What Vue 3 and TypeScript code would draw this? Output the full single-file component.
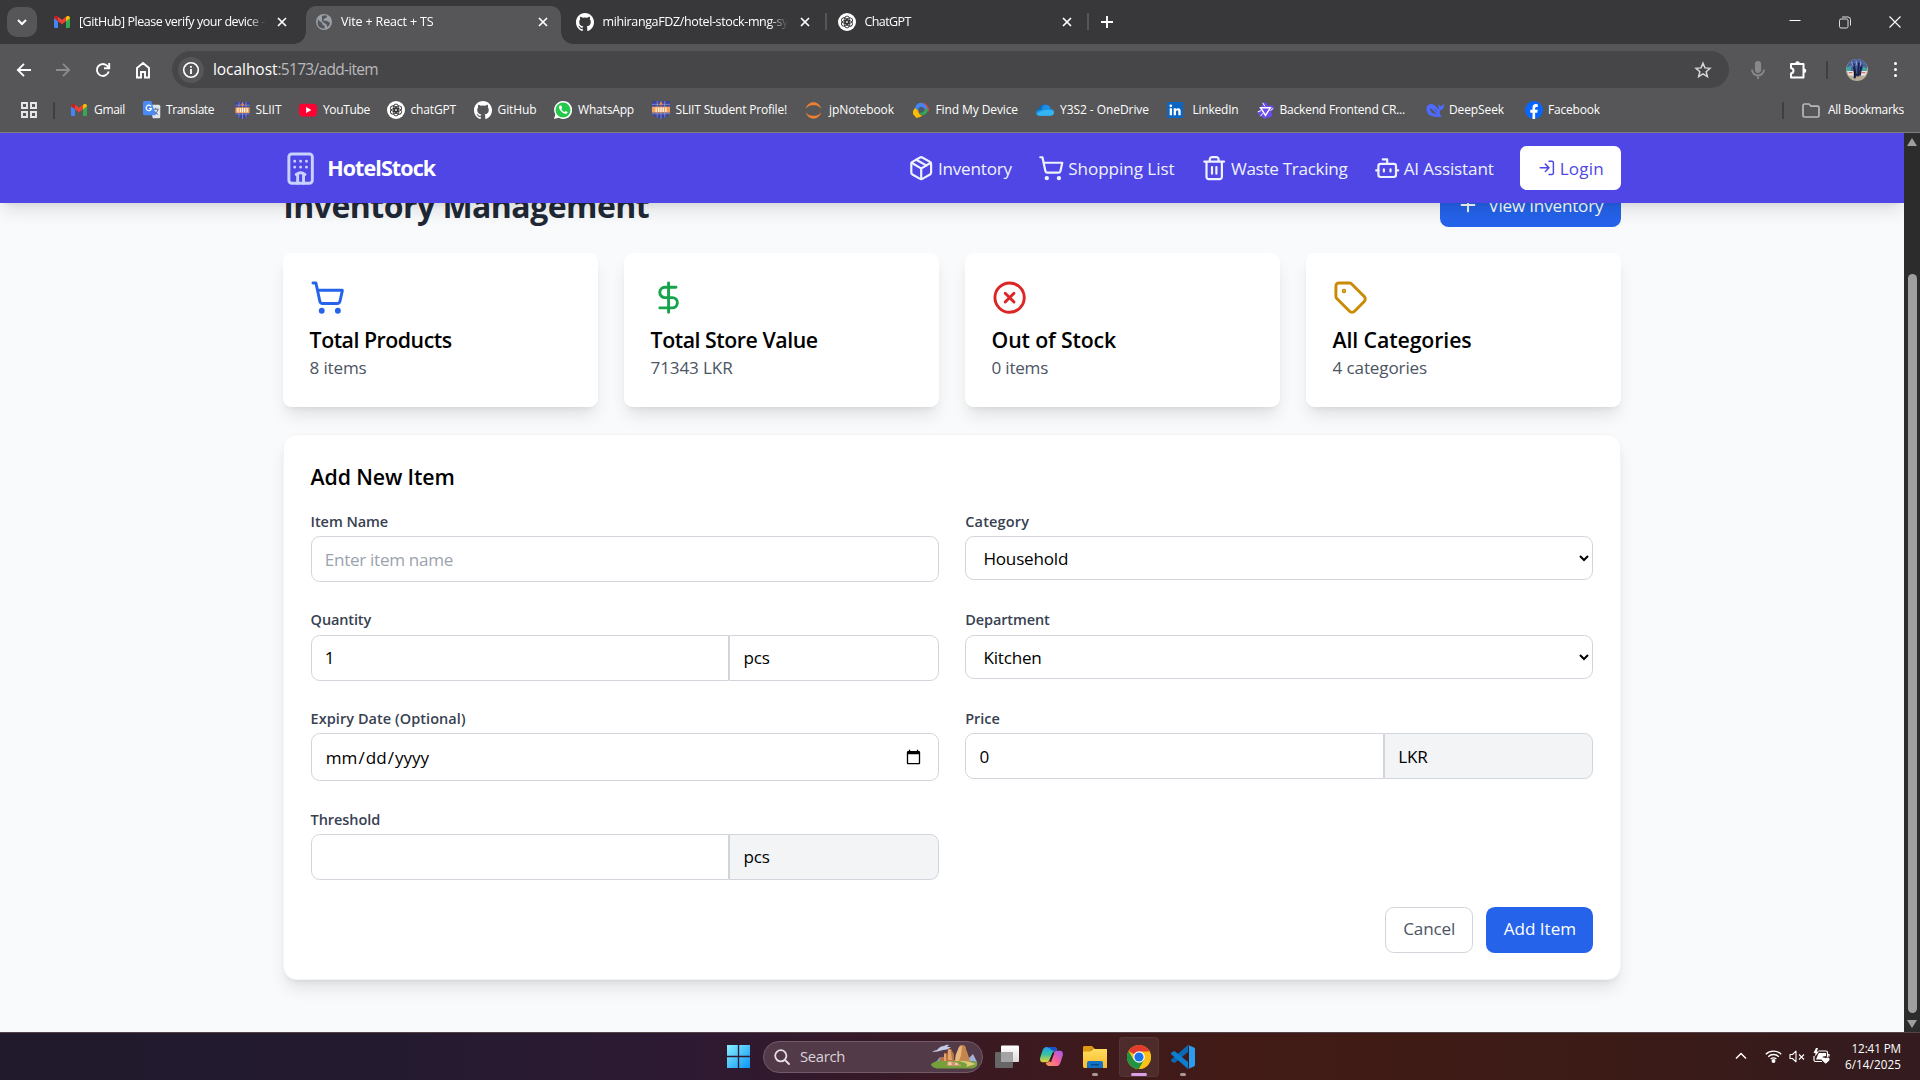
<script setup lang="ts">
import { h, type Directive, type FunctionalComponent } from 'vue'

// Tracks a label out or in so that it takes exactly the given advance width.
const vFit: Directive<HTMLElement, number> = {
  mounted(el, { value }) {
    el.style.letterSpacing = '0.001px'
    const natural = el.getBoundingClientRect().width
    const count = (el.textContent ?? '').trim().length
    el.style.letterSpacing = `${((value - natural) / count).toFixed(3)}px`
  },
}

const line: Record<string, string> = {
  hotel:
    '<path d="M10 22v-6.57M12 11h.01M12 7h.01M14 15.43V22M15 16a5 5 0 0 0-6 0M16 11h.01M16 7h.01M8 11h.01M8 7h.01"/><rect x="4" y="2" width="16" height="20" rx="2"/>',
  box: '<path d="M11 21.73a2 2 0 0 0 2 0l7-4A2 2 0 0 0 21 16V8a2 2 0 0 0-1-1.73l-7-4a2 2 0 0 0-2 0l-7 4A2 2 0 0 0 3 8v8a2 2 0 0 0 1 1.73z"/><path d="M12 22V12"/><path d="m3.3 7 7.703 4.734a2 2 0 0 0 1.994 0L20.7 7"/><path d="m7.5 4.27 9 5.15"/>',
  cart: '<circle cx="8" cy="21" r="1"/><circle cx="19" cy="21" r="1"/><path d="M2.05 2.05h2l2.66 12.42a2 2 0 0 0 2 1.58h9.78a2 2 0 0 0 1.95-1.57l1.65-7.43H5.12"/>',
  trash:
    '<path d="M3 6h18M19 6v14c0 1-1 2-2 2H7c-1 0-2-1-2-2V6M8 6V4c0-1 1-2 2-2h4c1 0 2 1 2 2v2M10 11v6M14 11v6"/>',
  bot: '<path d="M12 8V4H8"/><rect width="16" height="12" x="4" y="8" rx="2"/><path d="M2 14h2M20 14h2M15 13v2M9 13v2"/>',
  login: '<path d="M15 3h4a2 2 0 0 1 2 2v14a2 2 0 0 1-2 2h-4"/><path d="m10 17 5-5-5-5M15 12H3"/>',
  plus: '<path d="M5 12h14M12 5v14"/>',
  dollar: '<path d="M12 2v20M17 5H9.5a3.5 3.5 0 0 0 0 7h5a3.5 3.5 0 0 1 0 7H6"/>',
  circleX: '<circle cx="12" cy="12" r="10"/><path d="m15 9-6 6M9 9l6 6"/>',
  tag: '<path d="M12.586 2.586A2 2 0 0 0 11.172 2H4a2 2 0 0 0-2 2v7.172a2 2 0 0 0 .586 1.414l8.704 8.704a2.426 2.426 0 0 0 3.42 0l6.58-6.58a2.426 2.426 0 0 0 0-3.42z"/><circle cx="7.5" cy="7.5" r=".5" fill="currentColor"/>',
}

const shield = (edge: number) =>
  `<path d="M${edge} 0H${24 - edge}V15q0 6-${12 - edge} 9Q${edge} 21 ${edge} 15z" fill="#3b459c"/><path d="M${edge} 4.500H${24 - edge}M${edge} 17H${24 - edge}M7 0v22M12 0v24M17 0v22" stroke="#a9addb" stroke-width=".8"/><path d="M${edge} 7.500H${24 - edge}V15.500H${edge}z" fill="#f2a25c"/><path d="M5.500 8.500v6M9 8.500v6M12 8.500v6M15 8.500v6M18.500 8.500v6" stroke="#fff" stroke-width="1.500"/><path d="M9 5l3-4.500L15 5z" fill="#f08030"/>`

const knot =
  '<circle cx="12" cy="12" r="12" fill="#fff"/><g fill="none" stroke="#333" stroke-width="1.2"><ellipse cx="12" cy="9" rx="3.6" ry="5"/><ellipse cx="12" cy="9" rx="3.6" ry="5" transform="rotate(60 12 12)"/><ellipse cx="12" cy="9" rx="3.6" ry="5" transform="rotate(120 12 12)"/><ellipse cx="12" cy="9" rx="3.6" ry="5" transform="rotate(180 12 12)"/><ellipse cx="12" cy="9" rx="3.6" ry="5" transform="rotate(240 12 12)"/><ellipse cx="12" cy="9" rx="3.6" ry="5" transform="rotate(300 12 12)"/></g>'

const art: Record<string, string> = {
  gmail:
    '<path d="M0 5v14a2 2 0 0 0 2 2h4V10z" fill="#4285f4"/><path d="M18 10v11h4a2 2 0 0 0 2-2V5z" fill="#34a853"/><path d="M18 4v7l6-4.500V6c0-3-3.200-3.700-5-2.400z" fill="#fbbc04"/><path d="M6 11V4l6 4.500L18 4v7l-6 4.500z" fill="#ea4335"/><path d="M0 6v.5L6 11V4L5 3.400C3 2 0 3 0 6z" fill="#c5221f"/>',
  globe:
    '<circle cx="12" cy="12" r="12" fill="#9aa0a6"/><path d="M3 8q2 4 6 5l1 3 3 2v4Q4 22 2.500 15z M9 3q5-2 8 0l-2 3-3 1-1 3h5l3 2 2 1q0 4-4 7l-1-4-3-2-4-3z" fill="#55565a"/>',
  github:
    '<path fill="#fff" d="M12 0C5.370 0 0 5.500 0 12.300c0 5.400 3.440 10 8.200 11.650.6.100.820-.260.820-.600v-2.300c-3.340.740-4.040-1.450-4.040-1.450-.550-1.420-1.330-1.800-1.330-1.800-1.100-.760.080-.750.080-.750 1.200.1 1.840 1.270 1.840 1.270 1.070 1.870 2.800 1.330 3.490 1.020.1-.8.420-1.330.760-1.640-2.670-.300-5.470-1.360-5.470-6.070 0-1.340.470-2.440 1.240-3.300-.130-.300-.540-1.560.100-3.250 0 0 1-.330 3.300 1.260a11.200 11.200 0 0 1 6 0c2.300-1.600 3.300-1.260 3.300-1.260.640 1.690.240 2.950.120 3.250.770.860 1.230 1.960 1.230 3.300 0 4.720-2.800 5.760-5.480 6.060.430.380.810 1.130.810 2.280v3.380c0 .340.220.720.830.6C20.570 22.300 24 17.700 24 12.300 24 5.500 18.630 0 12 0z"/>',
  knot,
  translate:
    '<path d="M9 5h12a2 2 0 0 1 2 2v14a2 2 0 0 1-2 2h-8z" fill="#dfe3ea"/><path d="M13 11h8M17 9v2M20 11q-1 5-5 7M15 13q2 4 5 5" stroke="#5a6f93" stroke-width="1.300" fill="none"/><path d="M2 0h9l6 19H2a2 2 0 0 1-2-2V2a2 2 0 0 1 2-2z" fill="#4a8bf5"/><path d="M10.800 7.200A3.600 3.600 0 1 0 11.300 10H8" stroke="#fff" stroke-width="1.600" fill="none"/>',
  sliit: shield(2),
  sliit2: shield(0),
  youtube:
    '<rect x="0" y="3.500" width="24" height="17" rx="5" fill="#f03"/><path d="M9.500 8v8l7-4z" fill="#fff"/>',
  whatsapp:
    '<path d="M12 0a12 12 0 0 0-10.300 18L0 24l6.200-1.600A12 12 0 1 0 12 0z" fill="#fff"/><circle cx="12" cy="12" r="10" fill="#25c84a"/><path d="M8 6c-2 1-2 4 1.500 7.500S16.500 18 18 16v-1.500l-2.700-1.300-1.300 1.400c-2-.6-3.800-2.600-4.300-4L11 9.300 9.700 6z" fill="#fff"/>',
  jupyter:
    '<path d="M1 9.500C3 3 8 0.500 12 0.500S21 3 23 9.500C19 5 16 4.500 12 4.500S5 5 1 9.500z" fill="#f08030"/><path d="M1 14.500C3 21 8 23.500 12 23.500S21 21 23 14.500C19 19 16 19.500 12 19.500S5 19 1 14.500z" fill="#f08030"/>',
  find: '<path d="M13 1q10 1 11 13h-5q-1-6-6-7z" fill="#ea4335"/><path d="M13 1q-8 0-10 8l5 4q0-6 5-6 4 1 5 5l4 2Q22 4 13 1z" fill="#4285f4"/><path d="M13 1q8 2 9 8l2 5q0-12-11-13z" fill="#ea4335"/><path d="M22 9q1 10-8 11l-5-3 3-3q6 1 6-3z" fill="#34a853"/><path d="M3 9q-4 4-3 9l5 6q6 0 9-4-6-1-6-7z" fill="#fbbc04"/><circle cx="12.500" cy="12" r="4" fill="#4a5a6a"/>',
  onedrive:
    '<path d="M4 19a5 5 0 0 1 0-9.500A8 8 0 0 1 17 7z" fill="#0f6cbd"/><path d="M7 12Q9 4 14 5t5 5q5 1 5 5t-4 4.500H5q-5 0-5-4t7-3.500z" fill="#1a8fe3"/><path d="M1 17q10-8 22-4 3 6-4 6.500H5q-3 0-4-2.500z" fill="#35b5f2"/>',
  linkedin:
    '<rect width="24" height="24" fill="#0a66c2"/><path d="M4 9.500h3.500V20H4zM10 9.500h3.300V11q1.200-1.800 3.500-1.800 3.700 0 3.700 4.600V20H17v-5.500q0-2.300-1.700-2.300-1.900 0-1.900 2.300V20H10z" fill="#fff"/><circle cx="5.700" cy="5.700" r="2" fill="#fff"/>',
  qwen: '<path d="M8 1h5l2 4h7l2 4-4 5 2 4-3 4h-5l-4 2-3-4H4l-3-5 3-4-1-4 4-1z" fill="#6a4cf0"/><path d="M5 8h14l-7 11z" fill="none" stroke="#fff" stroke-width="2"/><path d="M8 1l3 5M23 9l-4 3M5 20l3-4M1 14l5-2" stroke="#fff" stroke-width="1.400"/>',
  deepseek:
    '<path d="M1 8c2-5 8-5 11-2 3 2 4 5 6 6-2-4-1-6-1-8 1 2 2 3 3 3l4-3c0 6-2 8-5 8-1 4-1 6 2 8-3 2-6 1-8 1C5 21-1 16 1 8z" fill="#4d6bfe"/><path d="M5 10c4 0 6 5 9 7-4 1-8-2-9-7z" fill="#55565a"/><path d="M12 11q2 1 2 3" fill="none" stroke="#55565a" stroke-width="1.200"/>',
  facebook:
    '<circle cx="12" cy="12" r="12" fill="#0866ff"/><path d="M10 24v-8.500H7V11.500h3V9q0-5 4.500-5 1.500 0 2.500.300V8h-1.700q-1.800 0-1.800 1.700v1.800H17l-.7 4h-2.800V24z" fill="#fff"/>',
  avatar:
    '<circle cx="12" cy="12" r="12" fill="#b8ad94"/><path d="M1 8Q4 0 12 0t11 8l-1 6H2z" fill="#4a62a0"/><path d="M0 10l6-3-1 8H1zM19 8l4 3-1 4-5-1z" fill="#3fa7a0"/><path d="M1 13h7v5H3zM16 13h7l-2 5h-5z" fill="#ece6e6"/><path d="M3 15h4M17 15h4" stroke="#d04848" stroke-width="1.200"/><path d="M8 5l3 12-2 4M14 4l-1 15M17 6l-2 12" stroke="#1a2350" stroke-width="2.200"/><path d="M6 3l2 5M11 2l1 5M16 3v5" stroke="#93a0d0" stroke-width="1.200"/>',
  windows:
    '<defs><linearGradient id="w" x1="0" y1="0" x2="1" y2="1"><stop stop-color="#8af0ff"/><stop offset="1" stop-color="#0a94f5"/></linearGradient></defs><path d="M0 0h11.300v11.300H0zM12.700 0H24v11.300H12.700zM0 12.700h11.300V24H0zM12.700 12.700H24V24H12.700z" fill="url(#w)"/>',
  taskview:
    '<defs><linearGradient id="t" x2="0" y2="1"><stop stop-color="#fff"/><stop offset="1" stop-color="#dcdcdc"/></linearGradient></defs><rect x="0" y="7" width="18" height="16" rx="1" fill="#666"/><rect x="6" y="0.500" width="18" height="16.500" rx="1" fill="url(#t)"/><path d="M6 7h12v10H6z" fill="#a5a3a3"/>',
  copilot:
    '<defs><linearGradient id="c1" x1="0" y1="0" x2="0" y2="1"><stop stop-color="#1f9cf0"/><stop offset=".5" stop-color="#38c3a0"/><stop offset="1" stop-color="#f0d030"/></linearGradient><linearGradient id="c2" x1="1" y1="0" x2="0" y2="1"><stop stop-color="#9a5cf5"/><stop offset=".5" stop-color="#f5609a"/><stop offset="1" stop-color="#ffa050"/></linearGradient></defs><path d="M7 2h8q2 0 3 3l-4 2-4 8q-1 3-4 3H3q-3 0-3-4 1-4 3-9 1-3 4-3z" fill="url(#c1)"/><path d="M7 2h8q2 0 3 4h-4q-2 0-3-2z" fill="#1b50c8"/><path d="M17 22H9q-2 0-3-3l4-2 4-8q1-3 4-3h3q3 0 3 4-1 4-3 9-1 3-4 3z" fill="url(#c2)"/><path d="M13 8l-3 9 1.500 1 3.500-10z" fill="#351822"/>',
  folder:
    '<defs><linearGradient id="f" x2="0" y2="1"><stop stop-color="#ffdc5c"/><stop offset="1" stop-color="#f8bc2c"/></linearGradient></defs><path d="M1 1h8l3 3h-3l-2 3H0V2z" fill="#dd9a10"/><path d="M0 6.500h7L10 4h14v19H1l-1-1z" fill="url(#f)"/><path d="M4 23v-5q0-2 2-2h12q2 0 2 2v5z" fill="#1173c4"/><path d="M8 19h8v1.500H8z" fill="#0a4a8a"/>',
  chrome:
    '<circle cx="12" cy="12" r="12" fill="#fbc116"/><path d="M12 12L1.600 6A12 12 0 0 1 22.400 6z" fill="#e33b2e"/><path d="M22.400 6H12v6z" fill="#e33b2e"/><path d="M1.600 6A12 12 0 0 0 12 24l5.200-9L12 12 6.800 15z" fill="#229342"/><path d="M12 6.500h10.600A12 12 0 0 1 12 24l5-9z" fill="#fbc116"/><circle cx="12" cy="12" r="5.800" fill="#fff"/><circle cx="12" cy="12" r="4.600" fill="#1a73e8"/>',
  vscode:
    '<path d="M17 0v7L3.500 18 0.500 16.500q-1-1 0-2z" fill="#0a6ab8"/><path d="M17 24v-7L3.500 6 0.500 7.500q-1 1 0 2z" fill="#0c7fd0"/><path d="M17 0l6 2.600q1 .4 1 1.400v16q0 1-1 1.400L17 24q1-.5 1-2V2q0-1.500-1-2z" fill="#2a9df0"/>',
}

const Line: FunctionalComponent<{ n: string; s: number }> = (p) =>
  h('svg', {
    width: p.s,
    height: p.s,
    viewBox: '0 0 24 24',
    fill: 'none',
    stroke: 'currentColor',
    'stroke-width': 2,
    'stroke-linecap': 'round',
    'stroke-linejoin': 'round',
    innerHTML: line[p.n],
  })
Line.props = ['n', 's']

const Art: FunctionalComponent<{ n: string; s: number }> = (p) =>
  h('svg', {
    width: p.s,
    height: p.s,
    viewBox: '0 0 24 24',
    innerHTML: art[p.n],
  })
Art.props = ['n', 's']

const tabs = [
  { icon: 'gmail', size: 16, title: '[GitHub] Please verify your device -', fit: 186, room: 187, w: 262, pl: 10, gap: 9, pr: 18.5, active: false, sep: false },
  { icon: 'globe', size: 16, title: 'Vite + React + TS', fit: 92.5, room: 187, w: 255, pl: 10, gap: 9, pr: 12, active: true, sep: false },
  { icon: 'github', size: 18, title: 'mihirangaFDZ/hotel-stock-mng-sy', fit: 185.5, room: 185, w: 265, pl: 15, gap: 8.5, pr: 15, active: false, sep: true },
  { icon: 'knot', size: 18, title: 'ChatGPT', fit: 46.5, room: 185, w: 262, pl: 12, gap: 8.4, pr: 15, active: false, sep: true },
]

const bookmarks = [
  { icon: 'gmail', label: 'Gmail', slot: 72, iw: 16, gap: 7, fit: 31 },
  { icon: 'translate', label: 'Translate', slot: 91, iw: 18, gap: 5, fit: 48 },
  { icon: 'sliit', label: 'SLIIT', slot: 65, iw: 17, gap: 4.5, fit: 26 },
  { icon: 'youtube', label: 'YouTube', slot: 88, iw: 18, gap: 6, fit: 47 },
  { icon: 'knot', label: 'chatGPT', slot: 87, iw: 18, gap: 5.5, fit: 45.5 },
  { icon: 'github', label: 'GitHub', slot: 80, iw: 18, gap: 5.5, fit: 39 },
  { icon: 'whatsapp', label: 'WhatsApp', slot: 98, iw: 18, gap: 6, fit: 56 },
  { icon: 'sliit2', label: 'SLIIT Student Profile!', slot: 153, iw: 18, gap: 5.5, fit: 111.5 },
  { icon: 'jupyter', label: 'jpNotebook', slot: 108, iw: 17, gap: 7, fit: 65 },
  { icon: 'find', label: 'Find My Device', slot: 123, iw: 16, gap: 6.5, fit: 82.5 },
  { icon: 'onedrive', label: 'Y3S2 - OneDrive', slot: 131, iw: 18, gap: 6, fit: 89 },
  { icon: 'linkedin', label: 'LinkedIn', slot: 90, iw: 16, gap: 9.5, fit: 46 },
  { icon: 'qwen', label: 'Backend Frontend CR...', slot: 169, iw: 17, gap: 5.5, fit: 125.5 },
  { icon: 'deepseek', label: 'DeepSeek', slot: 99, iw: 18, gap: 5, fit: 55 },
  { icon: 'facebook', label: 'Facebook', slot: 90, iw: 18, gap: 5, fit: 52 },
]

const links = [
  { icon: 'box', label: 'Inventory', fit: 74 },
  { icon: 'cart', label: 'Shopping List', fit: 106.5 },
  { icon: 'trash', label: 'Waste Tracking', fit: 116.5 },
  { icon: 'bot', label: 'AI Assistant', fit: 90 },
]

const stats = [
  { icon: 'cart', tone: 'blue', title: 'Total Products', tf: 142, note: '8 items', nf: 57 },
  { icon: 'dollar', tone: 'green', title: 'Total Store Value', tf: 167, note: '71343 LKR', nf: 82 },
  { icon: 'circleX', tone: 'red', title: 'Out of Stock', tf: 124.5, note: '0 items', nf: 56.5 },
  { icon: 'tag', tone: 'amber', title: 'All Categories', tf: 139, note: '4 categories', nf: 94.5 },
]
</script>

<template>
  <div class="screen">
    <header class="browser">
      <div class="strip">
        <div class="tabsearch">
          <svg width="10" height="7" viewBox="0 0 10 7"><path d="M1 1l4 4 4-4" fill="none" stroke="#fff" stroke-width="2" /></svg>
        </div>
        <div
          v-for="t in tabs"
          :key="t.title"
          class="tab"
          :class="{ active: t.active, sep: t.sep }"
          :style="{ width: t.w + 'px', paddingLeft: t.pl + 'px', paddingRight: t.pr + 'px' }"
        >
          <Art :n="t.icon" :s="t.size" />
          <span class="room" :style="{ width: t.room + 'px', marginLeft: t.gap + 'px' }"><span v-fit="t.fit" class="t">{{ t.title }}</span></span>
          <svg class="x" width="12" height="12" viewBox="0 0 12 12"><path d="M2 2l8 8M10 2l-8 8" stroke="#fff" stroke-width="1.700" /></svg>
        </div>
        <svg class="newtab" width="14" height="14" viewBox="0 0 14 14"><path d="M7 1v12M1 7h12" stroke="#fff" stroke-width="1.900" /></svg>
        <div class="wincontrols">
          <span><svg width="12" height="12" viewBox="0 0 12 12"><path d="M.5 4.500h11" stroke="#fff" /></svg></span>
          <span><svg width="13" height="13" viewBox="0 0 13 13" fill="none" stroke="#ddd"><rect x="0.500" y="3" width="8.500" height="9" rx="1.500" /><path d="M3 1H9a2.500 2.500 0 0 1 2.500 2.500v6" /></svg></span>
          <span><svg width="12" height="12" viewBox="0 0 12 12"><path d="M.5.500l11 11M11.500.500l-11 11" stroke="#fff" stroke-width="1.100" /></svg></span>
        </div>
      </div>

      <div class="toolbar">
        <span class="slot"><svg width="16" height="16" viewBox="0 0 16 16" fill="none" stroke="#fff" stroke-width="1.800"><path d="M15 8H2M8 1.800L1.800 8 8 14.200" /></svg></span>
        <span class="slot"><svg width="16" height="16" viewBox="0 0 16 16" fill="none" stroke="#8c8c8e" stroke-width="1.800"><path d="M1 8h13M8 1.800L14.200 8 8 14.200" /></svg></span>
        <span class="slot"><svg width="16" height="16" viewBox="0 0 16 16" fill="none" stroke="#fff" stroke-width="1.900"><path d="M13.700 9.500A6 6 0 1 1 12.600 4.200L14 5.800" /><path d="M14.200 1v5.300H9" /></svg></span>
        <span class="slot"><svg width="16" height="18" viewBox="0 0 16 18" fill="none" stroke="#fff" stroke-width="1.900"><path d="M2 7l6-5 6 5v9.500h-4V11H6v5.500H2z" /></svg></span>
        <div class="omnibox">
          <span class="info"><svg width="18" height="18" viewBox="0 0 18 18" fill="none" stroke="#fff" stroke-width="1.600"><circle cx="9" cy="9" r="7.300" /><path d="M9 8v5M9 5v1.700" stroke-width="1.800" /></svg></span>
          <span class="url"><span v-fit="64.500" class="t host">localhost</span><span v-fit="100.500" class="t path">:5173/add-item</span></span>
          <svg class="star" width="18" height="18" viewBox="0 0 24 24" fill="none" stroke="#d5d5d7" stroke-width="2"><path d="M12 3l2.600 6.200 6.700.6-5.100 4.400 1.600 6.600L12 17.200l-5.800 3.600 1.600-6.600-5.100-4.400 6.700-.6z" /></svg>
        </div>
        <span class="mic"><svg width="16" height="20" viewBox="0 0 16 20" fill="none" stroke="#88888a" stroke-width="1.800"><rect x="5.800" y="2" width="4.400" height="10" rx="2.200" fill="#88888a" /><path d="M2 9.500a6 6 0 0 0 12 0M8 15.500V19" /></svg></span>
        <span class="puzzle"><svg width="20" height="20" viewBox="0 0 20 20" fill="none" stroke="#fff" stroke-width="2"><path d="M3 4H15.500V17.500H3V13.500q2.500-.5 2.500-2.700T3 8z" stroke-linejoin="round" /><path d="M7.200 3.500a2.300 2.300 0 0 1 4.600 0zM16 8.500a2.300 2.300 0 0 1 0 4.600z" fill="#fff" stroke="none" /></svg></span>
        <span class="bar"></span>
        <span class="avatar"><Art n="avatar" :s="22" /></span>
        <span class="dots"><i></i><i></i><i></i></span>
      </div>

      <div class="bookmarks">
        <svg class="apps" width="16" height="16" viewBox="0 0 16 16" fill="none" stroke="#e8e8e8" stroke-width="1.900"><path d="M1 1h5v5H1zM10 1h5v5h-5zM1 10h5v5H1zM10 10h5v5h-5z" /></svg>
        <i class="vbar"></i>
        <div v-for="b in bookmarks" :key="b.label" class="bm" :style="{ width: b.slot + 'px' }">
          <Art :n="b.icon" :s="b.iw" />
          <span v-fit="b.fit" class="t" :style="{ marginLeft: b.gap + 'px' }">{{ b.label }}</span>
        </div>
        <div class="allbm">
          <i class="vbar"></i>
          <svg width="18" height="15" viewBox="0 0 18 15" fill="none" stroke="#b9b9bb" stroke-width="1.700"><path d="M1 2.500Q1 1 2.500 1H7l2 2.200h6.500q1.500 0 1.500 1.500v7.800q0 1.500-1.500 1.500h-13Q1 14 1 12.500z" /></svg>
          <span v-fit="76" class="t">All Bookmarks</span>
        </div>
      </div>
    </header>

    <div class="viewport">
      <div class="page">
        <nav class="nav">
          <div class="inner">
            <div class="brand"><Line n="hotel" :s="35.2" /><span v-fit="108" class="t">HotelStock</span></div>
            <div class="links">
              <a v-for="l in links" :key="l.label"><Line :n="l.icon" :s="26.4" /><span v-fit="l.fit" class="t">{{ l.label }}</span></a>
              <button class="login"><Line n="login" :s="17.6" /><span v-fit="44" class="t">Login</span></button>
            </div>
          </div>
        </nav>

        <main class="content">
          <div class="heading">
            <h1><span v-fit="366" class="t">Inventory Management</span></h1>
            <button class="view"><Line n="plus" :s="22" /><span v-fit="115" class="t">View Inventory</span></button>
          </div>

          <section class="stats">
            <article v-for="s in stats" :key="s.title" class="stat">
              <Line :n="s.icon" :s="35.2" :class="s.tone" />
              <h3><span v-fit="s.tf" class="t">{{ s.title }}</span></h3>
              <p><span v-fit="s.nf" class="t">{{ s.note }}</span></p>
            </article>
          </section>

          <form class="panel" @submit.prevent>
            <h2><span v-fit="144" class="t">Add New Item</span></h2>
            <div class="grid">
              <div class="field">
                <label><span v-fit="77.500" class="t">Item Name</span></label>
                <input type="text" class="ph" placeholder="Enter item name" />
              </div>
              <div class="field">
                <label><span v-fit="64" class="t">Category</span></label>
                <select><option>Household</option></select>
              </div>
              <div class="field">
                <label><span v-fit="60.500" class="t">Quantity</span></label>
                <div class="split"><input type="number" value="1" /><input class="unit" value="pcs" /></div>
              </div>
              <div class="field">
                <label><span v-fit="84.500" class="t">Department</span></label>
                <select><option>Kitchen</option></select>
              </div>
              <div class="field">
                <label><span v-fit="155" class="t">Expiry Date (Optional)</span></label>
                <input type="date" class="date" />
              </div>
              <div class="field">
                <label><span v-fit="34.500" class="t">Price</span></label>
                <div class="split"><input type="number" value="0" /><input class="unit muted" value="LKR" /></div>
              </div>
              <div class="field">
                <label><span v-fit="69.500" class="t">Threshold</span></label>
                <div class="split"><input type="number" /><input class="unit muted" value="pcs" /></div>
              </div>
            </div>
            <div class="actions">
              <button class="cancel"><span v-fit="52" class="t">Cancel</span></button>
              <button class="add"><span v-fit="72.500" class="t">Add Item</span></button>
            </div>
          </form>
        </main>
      </div>
      <div class="scroll"><i class="up"></i><i class="thumb"></i><i class="down"></i></div>
    </div>

    <footer class="taskbar">
      <Art n="windows" :s="23" class="start" />
      <div class="search">
        <svg width="16" height="16" viewBox="0 0 16 16" fill="none" stroke="#e6dfe3" stroke-width="1.800"><circle cx="6.800" cy="6.800" r="5.600" /><path d="M11 11l4 4" stroke-linecap="round" /></svg>
        <span v-fit="45" class="t">Search</span>
        <svg class="scene" width="48" height="25" viewBox="0 0 48 25">
          <path d="M5 19l5-6 5 6z" fill="#8e9cc6" />
          <path d="M36 17l7-7 4 8z" fill="#a3b2d8" />
          <path d="M1 20Q8 15 24 16t23 2q2 4-4 6.500H7Q1 23 1 20z" fill="#76a03c" />
          <path d="M25 17q0-6 3-12 1-4 4-4 4 0 4 4 2 5 4 12z" fill="#c4864c" />
          <path d="M28 6q1-4 4-4l-1 9-2 6h-4q0-6 3-11z" fill="#e8b87c" />
          <path d="M10 17v-3q2-2 4-1V9q3-1 3 2l1-6q4-1 4 2l2 3v7z" fill="#b87444" />
          <path d="M18 6q3-2 3 2l1 8h-4zM14 10q2-1 2 1v6h-2z" fill="#e0a46c" />
          <path d="M28 17q9-1 18 3l-10 3q4-4-8-6z" fill="#ddc878" />
          <path d="M17 20q0-3 3-3t4 1q4-1 5 2 3 1 2 2H19q-3 0-2-2z" fill="#c9976c" />
          <path d="M18 19q1-2 3-1l1 3h-4zM25 19q2-1 3 1v1h-3z" fill="#ecc9a6" />
          <path d="M2 8q3-2 5-2 3-4 7-4 3-2 5-1l-2 2 4 0q-3 3-8 3-5 2-11 2z" fill="#c3cae6" />
        </svg>
      </div>
      <div class="apps-row">
        <span class="app"><Art n="taskview" :s="24" /></span>
        <span class="app"><Art n="copilot" :s="23" /></span>
        <span class="app run"><Art n="folder" :s="24" /></span>
        <span class="app run on"><Art n="chrome" :s="24" /></span>
        <span class="app run"><Art n="vscode" :s="24" /></span>
      </div>
      <div class="tray">
        <svg class="chev" width="12" height="8" viewBox="0 0 12 8"><path d="M1 6.500l5-5 5 5" fill="none" stroke="#fff" stroke-width="1.500" /></svg>
        <svg class="wifi" width="17" height="14" viewBox="0 0 17 14" fill="none" stroke="#fff" stroke-width="1.300"><path d="M.8 5.200a11 11 0 0 1 15.400 0M3.200 7.700a7.500 7.500 0 0 1 10.600 0M5.600 10.100a4.200 4.200 0 0 1 5.800 0" /><circle cx="8.500" cy="12" r="1.300" fill="#fff" /></svg>
        <svg class="vol" width="16" height="13" viewBox="0 0 16 13" fill="none" stroke="#fff" stroke-width="1.100"><path d="M1 4.500h2.500L7 1.200v10.600L3.500 8.500H1z" stroke-linejoin="round" /><path d="M10 4.500l5 5M15 4.500l-5 5" /></svg>
        <svg class="bat" width="17" height="16" viewBox="0 0 17 16"><path d="M5.500 3H13q1.500 0 1.500 1.500v4.500M1 8v4q0 1.500 1.500 1.500H9M14.500 6.500h1.500v2" fill="none" stroke="#fff" stroke-width="1.200" /><path d="M6 5h7V8l-3 .5-1 3H3l2-5z" fill="#fff" /><path d="M3 0L.5 5h2L2 8.500 6 3.500H3.800L5 0z" fill="#fff" /><path d="M12.700 15.800l-3.500-3.300q-1-2 .8-3 1.700-.4 2.700.8 1-1.200 2.700-.8 1.800 1 .8 3z" fill="#fff" /></svg>
        <div class="clock"><span v-fit="49.500" class="t">12:41 PM</span><span v-fit="56" class="t">6/14/2025</span></div>
      </div>
    </footer>
  </div>
</template>

<style>
html,
body {
  margin: 0;
  overflow: hidden;
  background: #f9fafb;
}
</style>

<style scoped>
* {
  box-sizing: border-box;
}
.screen {
  width: 1920px;
  height: 1080px;
  display: flex;
  flex-direction: column;
  overflow: hidden;
  font-family: 'Open Sans', 'Noto Sans', sans-serif;
}
.t {
  display: inline-block;
  white-space: nowrap;
  flex: none;
}
svg {
  display: block;
  flex: none;
}
h1,
h2,
h3,
p {
  margin: 0;
}
button {
  border: 0;
  font: inherit;
  padding: 0;
}

.browser {
  flex: none;
  height: 133px;
  background: #565658;
  border-bottom: 1px solid #7d7d7f;
  color: #fff;
}
.strip {
  height: 44px;
  background: #38383a;
  display: flex;
  align-items: center;
}
.tabsearch {
  width: 30px;
  height: 30px;
  margin: 0 7px;
  border-radius: 10px;
  background: #565658;
  display: flex;
  align-items: center;
  justify-content: center;
}
.tab {
  flex: none;
  height: 44px;
  display: flex;
  align-items: center;
  font-size: 12.5px;
  line-height: 18px;
  position: relative;
}
.tab.active {
  height: 38px;
  align-self: flex-end;
  background: #565658;
  border-radius: 10px 10px 0 0;
  padding-bottom: 6px;
}
.tab.active::before,
.tab.active::after {
  content: '';
  position: absolute;
  bottom: 0;
  width: 12px;
  height: 12px;
}
.tab.active::before {
  left: -12px;
  background: radial-gradient(circle at 0 0, transparent 11.5px, #565658 12px);
}
.tab.active::after {
  right: -12px;
  background: radial-gradient(circle at 100% 0, transparent 11.5px, #565658 12px);
}
.tab.sep::after {
  content: '';
  position: absolute;
  right: -1px;
  top: 13px;
  width: 2px;
  height: 17px;
  background: #565658;
}
.room {
  display: block;
  overflow: hidden;
  white-space: nowrap;
  height: 18px;
  -webkit-mask-image: linear-gradient(90deg, #000 calc(100% - 18px), transparent);
  mask-image: linear-gradient(90deg, #000 calc(100% - 18px), transparent);
}
.x {
  margin-left: auto;
}
.newtab {
  margin-left: 11.500px;
}
.wincontrols {
  margin-left: auto;
  display: flex;
}
.wincontrols span {
  width: 50px;
  display: flex;
  justify-content: center;
}

.toolbar {
  height: 51px;
  display: flex;
  align-items: center;
  padding-left: 4px;
}
.slot {
  width: 39.600px;
  display: flex;
  justify-content: center;
}
.omnibox {
  margin-left: 9.600px;
  width: 1557px;
  height: 37px;
  border-radius: 19px;
  background: #464648;
  display: flex;
  align-items: center;
  padding: 0 17px 0 6px;
}
.info {
  width: 26px;
  height: 26px;
  border-radius: 50%;
  background: #565658;
  display: flex;
  align-items: center;
  justify-content: center;
}
.url {
  margin-left: 9px;
  padding-bottom: 1px;
  font-size: 15.500px;
  line-height: 22px;
  display: flex;
}
.path {
  color: #b9b9bb;
}
.star {
  margin-left: auto;
}
.mic,
.puzzle,
.bar,
.avatar,
.dots {
  display: flex;
  align-items: center;
  justify-content: center;
}
.mic {
  width: 40px;
  margin-left: 9px;
}
.puzzle {
  width: 40px;
}
.bar {
  width: 2px;
  height: 18px;
  margin: 0 10px 0 8px;
  background: #3f3f41;
}
.avatar {
  width: 38px;
}
.dots {
  width: 40px;
  flex-direction: column;
  gap: 3px;
}
.dots i {
  width: 3px;
  height: 3px;
  border-radius: 50%;
  background: #fff;
}

.bookmarks {
  height: 30px;
  display: flex;
  align-items: center;
  padding-left: 21px;
  font-size: 12px;
  line-height: 18px;
}
.vbar {
  width: 2px;
  height: 17px;
  background: #3f3f41;
}
.bookmarks > .vbar {
  margin: 0 16px 0 16px;
}
.bm {
  flex: none;
  display: flex;
  align-items: center;
}
.allbm {
  margin-left: auto;
  margin-right: 16px;
  display: flex;
  align-items: center;
}
.allbm svg {
  margin: 0 8px 0 18px;
}

.viewport {
  flex: none;
  height: 899px;
  display: flex;
}
.page {
  width: 1904px;
  height: 899px;
  overflow: hidden;
  background: #f9fafb;
  font-size: 17.100px;
}
.nav {
  position: relative;
  z-index: 2;
  height: 70.400px;
  background: #4f46e5;
  box-shadow: 0 11px 16.500px -3.300px rgba(0, 0, 0, 0.1), 0 4.400px 6.600px -4.400px rgba(0, 0, 0, 0.1);
}
.inner {
  width: 1337.600px;
  height: 100%;
  margin: 0 auto;
  display: flex;
  align-items: center;
  justify-content: space-between;
}
.brand {
  display: flex;
  align-items: center;
  gap: 8.800px;
  color: #c7d2fe;
  font-size: 21.500px;
  font-weight: 700;
  line-height: 30px;
}
.brand .t {
  color: #fff;
}
.links {
  display: flex;
  align-items: center;
  gap: 26.100px;
}
.links a {
  display: flex;
  align-items: center;
  gap: 3.800px;
  color: #eef2ff;
  line-height: 26px;
}
.links a .t {
  padding-top: 2px;
}
.login {
  width: 101px;
  height: 44px;
  padding-left: 18px;
  display: flex;
  align-items: center;
  gap: 4.400px;
  background: #fff;
  color: #4f46e5;
  border-radius: 6.600px;
}
.content {
  width: 1337.600px;
  margin: 0 auto;
}
.heading {
  height: 44px;
  margin-top: -20.400px;
  display: flex;
  align-items: center;
  justify-content: space-between;
}
h1 {
  padding-top: 2px;
  font-size: 32px;
  line-height: 40px;
  font-weight: 700;
  color: #1f2937;
}
.view {
  width: 181px;
  height: 44px;
  padding-left: 17.600px;
  display: flex;
  align-items: center;
  gap: 9px;
  background: #2563eb;
  color: #fff;
  border-radius: 8.800px;
}
.stats {
  margin-top: 26.400px;
  display: grid;
  grid-template-columns: repeat(4, 1fr);
  gap: 26.400px;
}
.stat {
  height: 153.600px;
  padding: 26.400px;
  background: #fff;
  border-radius: 8.800px;
  box-shadow: 0 11px 16.500px -3.300px rgba(0, 0, 0, 0.1), 0 4.400px 6.600px -4.400px rgba(0, 0, 0, 0.1);
}
.blue {
  color: #2563eb;
}
.green {
  color: #16a34a;
}
.red {
  color: #dc2626;
}
.amber {
  color: #ca8a04;
}
h3,
h2 {
  height: 30.800px;
  font-size: 21.300px;
  line-height: 32.800px;
  font-weight: 600;
  color: #000;
}
h3 {
  margin-top: 8.800px;
}
.stat p {
  line-height: 26.400px;
  color: #4b5563;
}
.panel {
  margin-top: 27px;
  height: 546px;
  padding: 26.400px;
  background: #fff;
  border: 1px solid #f3f4f6;
  border-radius: 13.200px;
  box-shadow: 0 11px 16.500px -3.300px rgba(0, 0, 0, 0.1), 0 4.400px 6.600px -4.400px rgba(0, 0, 0, 0.1);
}
.grid {
  margin-top: 17.600px;
  display: grid;
  grid-template-columns: 1fr 1fr;
  gap: 26.400px;
}
.field label {
  display: block;
  height: 22px;
  margin-bottom: 4.400px;
  font-size: 14.500px;
  line-height: 23.400px;
  font-weight: 600;
  color: #374151;
}
input,
select {
  display: block;
  width: 100%;
  height: 45.800px;
  margin: 0;
  padding: 0 13.200px;
  border: 1px solid #d1d5db;
  border-radius: 8.800px;
  background: #fff;
  color: #000;
  font-family: inherit;
  font-size: 17.100px;
  outline: 0;
}
select {
  height: 44px;
  padding-top: 1px;
  letter-spacing: -0.2px;
}
.ph {
  letter-spacing: -0.3px;
}
.ph::placeholder {
  color: #9ca3af;
}
.date {
  height: 48px;
  padding-right: 14.200px;
}
.split {
  display: flex;
}
.split input:first-child {
  width: 66.667%;
  border-radius: 8.800px 0 0 8.800px;
}
.split .unit {
  width: 33.333%;
  border-radius: 0 8.800px 8.800px 0;
  letter-spacing: -0.2px;
}
.split .muted {
  background: #f3f4f6;
}
.actions {
  margin-top: 27px;
  display: flex;
  justify-content: flex-end;
  gap: 13.200px;
}
.cancel,
.add {
  height: 46px;
  border-radius: 8.800px;
  padding-bottom: 2px;
}
.cancel {
  width: 88px;
  border: 1px solid #d1d5db;
  background: #fff;
  color: #4b5563;
}
.add {
  width: 107px;
  background: #2563eb;
  color: #fff;
}

.scroll {
  width: 16px;
  background: #2c2c2c;
  display: flex;
  flex-direction: column;
  align-items: center;
}
.up,
.down {
  border: 5px solid transparent;
}
.up {
  margin-top: 0;
  border-bottom: 8px solid #9f9f9f;
}
.thumb {
  margin-top: 128px;
  width: 9px;
  height: 739px;
  border-radius: 5px;
  background: #9f9f9f;
}
.down {
  margin-top: 7px;
  border-top: 8px solid #9f9f9f;
  border-bottom: 0;
  border-width: 8px 5px 0;
}

.taskbar {
  flex: none;
  height: 48px;
  display: flex;
  align-items: center;
  padding-left: 727px;
  border-top: 1px solid #55434a;
  background: linear-gradient(90deg, #201a2c 0, #241a30 400px, #2e1a32 700px, #3a1923 950px, #421b16 1240px, #3c1b16 1600px, #331b20 1920px);
}
.search {
  width: 220px;
  height: 32px;
  margin-left: 13px;
  padding: 0 4px 0 10px;
  display: flex;
  align-items: center;
  border: 1px solid #735a68;
  border-radius: 16px;
  background: #523a48;
  color: #ddd3d9;
  font-size: 14.800px;
}
.search .t {
  margin-left: 10px;
  padding-bottom: 1px;
}
.scene {
  margin-left: auto;
}
.apps-row {
  display: flex;
  gap: 4px;
  margin-left: 4px;
}
.app {
  width: 40px;
  height: 40px;
  border-radius: 4px;
  display: flex;
  align-items: center;
  justify-content: center;
  position: relative;
}
.app.on {
  background: rgba(255, 255, 255, 0.08);
  box-shadow: inset 0 0 0 1px rgba(255, 255, 255, 0.05);
}
.run::after {
  content: '';
  position: absolute;
  left: 17px;
  bottom: 1px;
  width: 6px;
  height: 3px;
  border-radius: 2px;
  background: #a89a9a;
}
.run.on::after {
  left: 12px;
  width: 16px;
  background: #dba0e6;
}
.tray {
  margin-left: auto;
  margin-right: 19px;
  display: flex;
  align-items: center;
  color: #fff;
}
.tray svg {
  margin-top: -1px;
}
.tray .wifi {
  margin-left: 18px;
}
.tray .vol {
  margin-left: 7px;
}
.tray .bat {
  margin-left: 8px;
}
.clock {
  width: 71px;
  padding-bottom: 2px;
  display: flex;
  flex-direction: column;
  align-items: flex-end;
  font-size: 11.700px;
  line-height: 16px;
}
</style>
